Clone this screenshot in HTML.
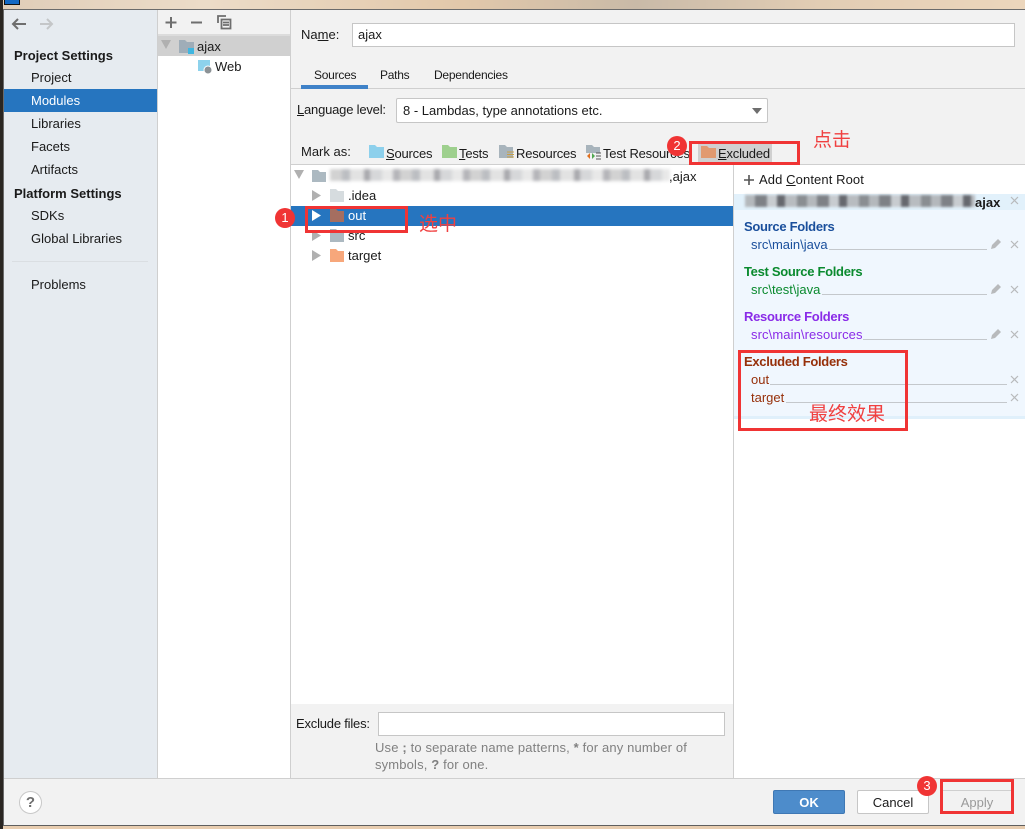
<!DOCTYPE html>
<html><head><meta charset="utf-8"><style>
html,body{margin:0;padding:0}
body{width:1025px;height:829px;overflow:hidden;position:relative;background:#e8cdb0;font-family:"Liberation Sans","Noto Sans CJK SC",sans-serif;font-size:13px;color:#1a1a1a}
.a,.t{position:absolute}
.t{white-space:nowrap;line-height:20px;height:20px;margin-top:1px}
.b{font-weight:bold}
.h{letter-spacing:-.3px}
.s{letter-spacing:-.2px}
.u{text-decoration:underline}
.r{position:absolute;border:3px solid #f03434;box-sizing:border-box}
.n{position:absolute;width:20px;height:20px;border-radius:50%;background:#f03434;color:#fff;text-align:center;line-height:20px;font-size:13px}
.c{color:#f04040;font-size:19px;line-height:24px;height:24px;margin-top:0}
.l{position:absolute;height:1px;background:#c4c8cc}
svg{position:absolute;overflow:visible}
.x{position:absolute;width:9px;height:9px}
</style></head><body>
<!-- outer chrome -->
<div class="a" style="left:0;top:0;width:1025px;height:9px;background:linear-gradient(90deg,#e0cdb8,#ecdcc8 20%,#e2c8aa 45%,#c9baa8 62%,#e2cdb4 80%,#ecd6bc)"></div>
<div class="a" style="left:4px;top:0;width:16px;height:5px;background:#1268c4;border:1px solid #111;border-top:0;box-sizing:border-box"></div>
<div class="a" style="left:0;top:0;width:3px;height:829px;background:#2a2622"></div>
<div class="a" style="left:3px;top:9px;width:1022px;height:817px;background:#f2f2f2;border-top:1px solid #6b6b6b;border-left:1px solid #6b6b6b;border-bottom:1px solid #5f5f5f;box-sizing:border-box"></div>
<!-- left sidebar -->
<div class="a" style="left:4px;top:10px;width:153px;height:768px;background:#e6ebf0"></div>
<div class="a" style="left:157px;top:10px;width:1px;height:768px;background:#cfcfcf"></div>
<svg style="left:0;top:1px" width="60" height="34"><path d="M26 24H13M18 19l-5 5 5 5" transform="translate(0,-1)" fill="none" stroke="#6e6e6e" stroke-width="2"/><path d="M40 23h12M47 18l5 5-5 5" fill="none" stroke="#c4c6c8" stroke-width="2"/></svg>
<div class="t b" style="left:14px;top:45px">Project Settings</div>
<div class="t" style="left:31px;top:67px">Project</div>
<div class="a" style="left:4px;top:89px;width:153px;height:23px;background:#2675bf"></div>
<div class="t" style="left:31px;top:90px;color:#fff">Modules</div>
<div class="t" style="left:31px;top:113px">Libraries</div>
<div class="t" style="left:31px;top:136px">Facets</div>
<div class="t" style="left:31px;top:159px">Artifacts</div>
<div class="t b" style="left:14px;top:183px">Platform Settings</div>
<div class="t" style="left:31px;top:205px">SDKs</div>
<div class="t" style="left:31px;top:228px">Global Libraries</div>
<div class="a" style="left:12px;top:261px;width:136px;height:1px;background:#dadee2"></div>
<div class="t" style="left:31px;top:274px">Problems</div>
<!-- module list -->
<div class="a" style="left:158px;top:10px;width:132px;height:24px;background:#f2f2f2"></div>
<div class="a" style="left:158px;top:34px;width:132px;height:744px;background:#fff"></div>
<div class="a" style="left:158px;top:34px;width:132px;height:2px;background:#dcdcdc"></div>
<div class="a" style="left:158px;top:36px;width:132px;height:20px;background:#d0d0d0"></div>
<div class="a" style="left:290px;top:10px;width:1px;height:768px;background:#cfcfcf"></div>
<svg style="left:158px;top:10px" width="90" height="24"><path d="M13 7v11M7.500 12.500h11M33 12.500h11" fill="none" stroke="#6e6e6e" stroke-width="2"/><path d="M60 13V6h8M63.500 9.500h9v9h-9zM65 12.500h6M65 15h6" fill="none" stroke="#6e6e6e" stroke-width="1.800"/></svg>
<svg style="left:161px;top:40px" width="10" height="10"><path d="M0 0h10L5 9z" fill="#b0b0b0"/></svg>
<svg style="left:179px;top:39px" width="16" height="16"><path d="M0 1h6l2 2h7v11H0z" fill="#9fadb8"/><path d="M9 9h6v6H9z" fill="#40b6e0"/></svg>
<div class="t" style="left:197px;top:36px">ajax</div>
<svg style="left:198px;top:59px" width="17" height="15"><path d="M0 1h12v11H0z" fill="#8dd2ec"/><circle cx="10" cy="11" r="4" fill="#8c9296" stroke="#fff"/></svg>
<div class="t" style="left:215px;top:56px">Web</div>
<!-- name + tabs -->
<div class="t" style="left:301px;top:24px">Na<span class="u">m</span>e:</div>
<div class="a" style="left:352px;top:23px;width:663px;height:24px;background:#fff;border:1px solid #c6c6c6;box-sizing:border-box"></div>
<div class="t" style="left:358px;top:24px">ajax</div>
<div class="t" style="left:314px;top:64px;font-size:12px;letter-spacing:-.25px">Sources</div>
<div class="t" style="left:380px;top:64px;font-size:12px;letter-spacing:-.25px">Paths</div>
<div class="t" style="left:434px;top:64px;font-size:12px;letter-spacing:-.25px">Dependencies</div>
<div class="a" style="left:291px;top:88px;width:734px;height:1px;background:#cfcfcf"></div>
<div class="a" style="left:301px;top:85px;width:67px;height:4px;background:#3f82c8"></div>
<div class="t s" style="left:297px;top:99px"><span class="u">L</span>anguage level:</div>
<div class="a" style="left:396px;top:98px;width:372px;height:25px;background:#fff;border:1px solid #c6c6c6;border-radius:2px;box-sizing:border-box"></div>
<div class="t" style="left:403px;top:100px">8 - Lambdas, type annotations etc.</div>
<svg style="left:752px;top:108px" width="10" height="6"><path d="M0 0h10L5 6z" fill="#6e6e6e"/></svg>
<!-- mark as -->
<div class="t" style="left:301px;top:141px">Mark as:</div>
<svg style="left:369px;top:145px" width="15" height="13"><path d="M0 0h6l2 2h7v11H0z" fill="#8dd0ec"/></svg>
<div class="t s" style="left:386px;top:143px"><span class="u">S</span>ources</div>
<svg style="left:442px;top:145px" width="15" height="13"><path d="M0 0h6l2 2h7v11H0z" fill="#9ed08e"/></svg>
<div class="t s" style="left:459px;top:143px"><span class="u">T</span>ests</div>
<svg style="left:499px;top:145px" width="16" height="14"><path d="M0 0h6l2 2h6v11H0z" fill="#a8b4bc"/><path d="M8 7h7M8 9.500h7M8 12h7" stroke="#c9a048" stroke-width="1"/></svg>
<div class="t s" style="left:516px;top:143px">Resources</div>
<svg style="left:586px;top:145px" width="16" height="15"><path d="M0 0h6l2 2h6v6H0z" fill="#a8b4bc"/><path d="M1 11l3-3v6z" fill="#e07020"/><path d="M6 8l3 3-3 3z" fill="#50a850"/><path d="M10 8h5M10 11h5M10 14h5" stroke="#555"/></svg>
<div class="t s" style="left:603px;top:143px">Test Resources</div>
<div class="a" style="left:698px;top:142px;width:74px;height:22px;background:#d0d0d0"></div>
<svg style="left:701px;top:146px" width="15" height="12"><path d="M0 0h6l2 2h7v10H0z" fill="#e19a70"/></svg>
<div class="t s" style="left:718px;top:143px"><span class="u">E</span>xcluded</div>
<div class="a" style="left:291px;top:164px;width:734px;height:1px;background:#cfcfcf"></div>
<!-- tree -->
<div class="a" style="left:291px;top:165px;width:442px;height:539px;background:#fff"></div>
<div class="a" style="left:733px;top:165px;width:1px;height:613px;background:#cfcfcf"></div>
<svg style="left:294px;top:170px" width="10" height="10"><path d="M0 0h10L5 9z" fill="#b0b0b0"/></svg>
<svg style="left:312px;top:170px" width="15" height="12"><path d="M0 0h6l2 2h6v10H0z" fill="#acb9c1"/></svg>
<div class="a" style="left:330px;top:169px;width:340px;height:12px;filter:blur(1.6px);background:repeating-linear-gradient(90deg,#d2d2d2 0 12px,#bcbec2 12px 20px,#e2e2e2 20px 34px,#a8a8ac 34px 40px,#d6d7d9 40px 52px,#e8e8e8 52px 63px,#b4b4b8 63px 70px)"></div>
<div class="t" style="left:669px;top:166px">,ajax</div>
<svg style="left:312px;top:190px" width="9" height="11"><path d="M0 0l9 5.500L0 11z" fill="#b0b0b0"/></svg>
<svg style="left:330px;top:189px" width="14" height="13"><path d="M0 0h6l2 2h6v11H0z" fill="#d6dcdf"/></svg>
<div class="t" style="left:348px;top:185px">.idea</div>
<div class="a" style="left:291px;top:206px;width:442px;height:20px;background:#2675bf"></div>
<svg style="left:312px;top:210px" width="9" height="11"><path d="M0 0l9 5.500L0 11z" fill="#fff"/></svg>
<svg style="left:330px;top:209px" width="14" height="13"><path d="M0 0h6l2 2h6v11H0z" fill="#a56e60"/></svg>
<div class="t" style="left:348px;top:205px;color:#fff">out</div>
<svg style="left:312px;top:230px" width="9" height="11"><path d="M0 0l9 5.500L0 11z" fill="#b0b0b0"/></svg>
<svg style="left:330px;top:229px" width="14" height="13"><path d="M0 0h6l2 2h6v11H0z" fill="#acb9c1"/></svg>
<div class="t" style="left:348px;top:225px">src</div>
<svg style="left:312px;top:250px" width="9" height="11"><path d="M0 0l9 5.500L0 11z" fill="#b0b0b0"/></svg>
<svg style="left:330px;top:249px" width="14" height="13"><path d="M0 0h6l2 2h6v11H0z" fill="#f7a77b"/></svg>
<div class="t" style="left:348px;top:245px">target</div>
<!-- right panel -->
<div class="a" style="left:734px;top:165px;width:291px;height:613px;background:#fff"></div>
<svg style="left:744px;top:175px" width="10" height="10"><path d="M5 0v10M0 5h10" stroke="#555" stroke-width="1.600"/></svg>
<div class="t" style="left:759px;top:169px;letter-spacing:.1px">Add <span class="u">C</span>ontent Root</div>
<div class="a" style="left:734px;top:194px;width:291px;height:225px;background:#f0f7fe"></div>
<div class="a" style="left:734px;top:194px;width:291px;height:16px;background:#e2f1fb"></div>
<div class="a" style="left:734px;top:416px;width:291px;height:3px;background:#e0f0fb"></div>
<div class="a" style="left:745px;top:195px;width:230px;height:12px;filter:blur(1.2px);background:repeating-linear-gradient(90deg,#b4b8bc 0 10px,#7e8186 10px 22px,#c8ccd0 22px 32px,#66686e 32px 40px,#b8bcc0 40px 52px,#8a8e92 52px 62px)"></div>
<div class="t b" style="left:975px;top:192px">ajax</div>
<div class="t b h" style="left:744px;top:216px;color:#1a4f9c">Source Folders</div>
<div class="t" style="left:751px;top:234px;color:#1a4f9c">src\main\java</div>
<div class="l" style="left:829px;top:249px;width:158px"></div>
<div class="t b h" style="left:744px;top:261px;color:#0a8a2e">Test Source Folders</div>
<div class="t" style="left:751px;top:279px;color:#0a8a2e">src\test\java</div>
<div class="l" style="left:822px;top:294px;width:165px"></div>
<div class="t b h" style="left:744px;top:306px;color:#8a2be8">Resource Folders</div>
<div class="t" style="left:751px;top:324px;color:#8a2be8;letter-spacing:.1px">src\main\resources</div>
<div class="l" style="left:863px;top:339px;width:124px"></div>
<div class="t b h" style="left:744px;top:351px;color:#96300a">Excluded Folders</div>
<div class="t" style="left:751px;top:369px;color:#96300a">out</div>
<div class="l" style="left:770px;top:384px;width:237px"></div>
<div class="t" style="left:751px;top:387px;color:#96300a">target</div>
<div class="l" style="left:786px;top:402px;width:221px"></div>
<svg style="left:991px;top:238px" width="11" height="100"><g fill="#b8babc"><path d="M0 11l1-4 6-6 3 3-6 6z"/><path d="M0 56l1-4 6-6 3 3-6 6zM0 101l1-4 6-6 3 3-6 6z"/></g></svg>
<svg style="left:1010px;top:196px" width="10" height="206"><path d="M1 1l7 7M8 1l-7 7M1 45l7 7M8 45l-7 7M1 90l7 7M8 90l-7 7M1 135l7 7M8 135l-7 7M1 180l7 7M8 180l-7 7M1 198l7 7M8 198l-7 7" stroke="#b8babc" stroke-width="1.200" fill="none"/></svg>
<!-- exclude -->
<div class="t s" style="left:296px;top:713px">Exclude files:</div>
<div class="a" style="left:378px;top:712px;width:347px;height:24px;background:#fff;border:1px solid #c6c6c6;box-sizing:border-box"></div>
<div class="t" style="left:375px;top:737px;color:#808080;letter-spacing:.15px">Use <b>;</b> to separate name patterns, <b>*</b> for any number of</div>
<div class="t" style="left:375px;top:754px;color:#808080;letter-spacing:.15px">symbols, <b>?</b> for one.</div>
<!-- footer -->
<div class="a" style="left:4px;top:778px;width:1021px;height:1px;background:#cfcfcf"></div>
<div class="a" style="left:19px;top:791px;width:23px;height:23px;border-radius:50%;background:#fff;border:1px solid #c8c8c8;box-sizing:border-box;text-align:center;line-height:21px;font-weight:bold;font-size:15px;color:#6e6e6e">?</div>
<div class="a" style="left:773px;top:790px;width:72px;height:24px;background:#4d8ccb;border:1px solid #3f78b4;border-radius:2px;box-sizing:border-box;text-align:center;line-height:23px;color:#fff;font-weight:bold">OK</div>
<div class="a" style="left:857px;top:790px;width:72px;height:24px;background:#fff;border:1px solid #c6c6c6;border-radius:2px;box-sizing:border-box;text-align:center;line-height:23px">Cancel</div>
<div class="a" style="left:941px;top:790px;width:72px;height:24px;border:1px solid #cfcfcf;border-radius:2px;box-sizing:border-box;text-align:center;line-height:24px;color:#9a9a9a">Apply</div>
<!-- annotations -->
<div class="r" style="left:689px;top:141px;width:111px;height:24px"></div>
<div class="r" style="left:305px;top:206px;width:103px;height:27px"></div>
<div class="r" style="left:738px;top:350px;width:170px;height:81px"></div>
<div class="r" style="left:940px;top:779px;width:74px;height:35px"></div>
<div class="n" style="left:275px;top:208px">1</div>
<div class="n" style="left:667px;top:136px">2</div>
<div class="n" style="left:917px;top:776px">3</div>
<div class="t c" style="left:813px;top:129px">点击</div>
<div class="t c" style="left:419px;top:213px">选中</div>
<div class="t c" style="left:809px;top:403px">最终效果</div>
</body></html>
